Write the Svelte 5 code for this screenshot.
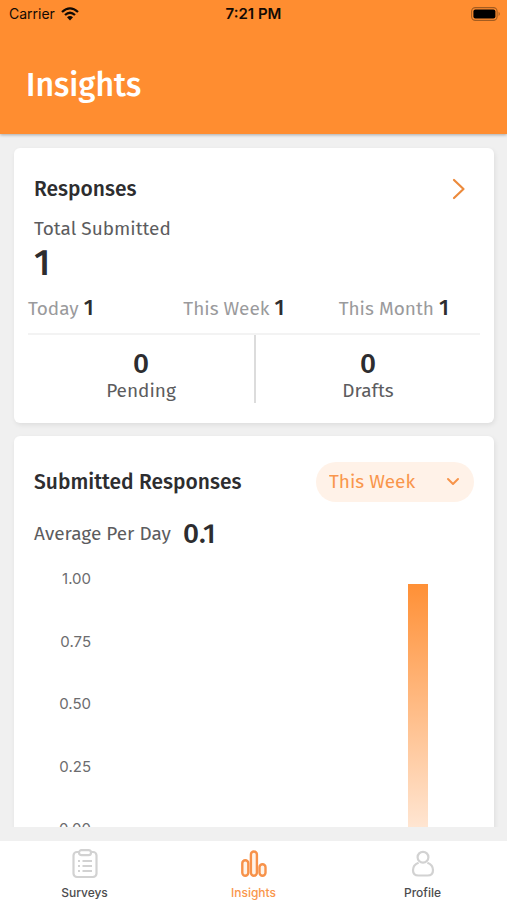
<script>
  const periods = [
    { label: 'Today', count: 1 },
    { label: 'This Week', count: 1 },
    { label: 'This Month', count: 1 }
  ];
  const queues = [
    { label: 'Pending', count: 0 },
    { label: 'Drafts', count: 0 }
  ];
  const ticks = ['1.00', '0.75', '0.50', '0.25', '0.00'];
  const days = [0, 0, 0, 0, 0, 0, 1];
  let range = $state('This Week');
</script>

<div class="app">
  <header>
    <div class="status">
      <div class="carrier">
        <span>Carrier</span>
        <svg width="20" height="14" viewBox="0 0 18 14" aria-hidden="true">
          <g fill="none" stroke="#120a04" stroke-width="2.3">
            <path d="M1 5 Q9 -2.2 17 5" />
            <path d="M4 8 Q9 3.4 14 8" />
          </g>
          <path d="M6 10.2 Q9 7.8 12 10.2 L9 13.4 Z" fill="#120a04" />
        </svg>
      </div>
      <time>7:21 PM</time>
      <div class="battery">
        <svg width="30" height="14" viewBox="0 0 30 14" aria-hidden="true">
          <rect x=".6" y=".6" width="25.5" height="12.8" rx="3.8" fill="none" stroke="#a35c20" stroke-width="1.1" />
          <rect x="2.4" y="2.4" width="22" height="9.2" rx="2" fill="#000" />
          <path d="M27.6 4.8 Q30 7 27.6 9.2Z" fill="#a35c20" />
        </svg>
      </div>
    </div>
    <h1>Insights</h1>
  </header>

  <main>
    <section class="card">
      <div class="card-head">
        <h2>Responses</h2>
        <button class="more" aria-label="View responses">
          <svg width="14" height="22" viewBox="0 0 14 22" aria-hidden="true">
            <path d="M2 2 L11.5 11 L2 20" fill="none" stroke="#ec8a3c" stroke-width="2.2" stroke-linecap="round" stroke-linejoin="round" />
          </svg>
        </button>
      </div>
      <div class="total">
        <p>Total Submitted</p>
        <strong>1</strong>
      </div>
      <div class="periods">
        {#each periods as p}
          <div>{p.label} <b>{p.count}</b></div>
        {/each}
      </div>
      <div class="queues">
        {#each queues as q}
          <div class="queue"><strong>{q.count}</strong><span>{q.label}</span></div>
        {/each}
      </div>
    </section>

    <section class="card">
      <div class="card-head">
        <h2>Submitted Responses</h2>
        <div class="picker">
          <select bind:value={range} aria-label="Period">
            <option>This Week</option>
            <option>This Month</option>
          </select>
          <svg width="14" height="10" viewBox="0 0 14 10" aria-hidden="true">
            <path d="M2 2 L7 7 L12 2" fill="none" stroke="#f7944a" stroke-width="2" stroke-linecap="round" stroke-linejoin="round" />
          </svg>
        </div>
      </div>
      <div class="average"><span>Average Per Day</span><strong>0.1</strong></div>
      <div class="chart">
        <div class="axis">
          {#each ticks as t}<span>{t}</span>{/each}
        </div>
        <div class="plot">
          {#each days as d}
            <div class="day"><div class="bar" style="height: {d * 100}%"></div></div>
          {/each}
        </div>
      </div>
    </section>
  </main>

  <nav>
    <a href="#surveys">
      <svg width="28" height="32" viewBox="0 0 28 32" aria-hidden="true">
        <g fill="none" stroke="#d2d2d2" stroke-width="2.2" stroke-linejoin="round">
          <rect x="2.5" y="4" width="23" height="25" rx="3.5" />
          <rect x="8" y="2.2" width="12" height="5" rx="2.5" fill="#fff" />
          <path stroke-width="1.8" d="M11.5 13 H21 M11.5 18 H21 M11.5 23 H21 M7 13 H9 M7 18 H9 M7 23 H9" />
        </g>
      </svg>
      <span>Surveys</span>
    </a>
    <a href="#insights" class="active" aria-current="page">
      <svg width="28" height="32" viewBox="0 0 28 32" aria-hidden="true">
        <g fill="#fff3e8" stroke="#f7924a" stroke-width="2.4">
          <rect x="2.3" y="12.3" width="6" height="15.4" rx="3" />
          <rect x="10.9" y="3.5" width="6" height="24.2" rx="3" />
          <rect x="19.5" y="16.3" width="6" height="11.4" rx="3" />
        </g>
      </svg>
      <span>Insights</span>
    </a>
    <a href="#profile">
      <svg width="28" height="32" viewBox="0 0 28 32" aria-hidden="true">
        <g fill="none" stroke="#d2d2d2" stroke-width="2.2">
          <circle cx="14" cy="9.2" r="5.4" />
          <path d="M9.6 14.8 Q4 17 4 22.2 Q4 27.5 9.5 27.5 H18.5 Q24 27.5 24 22.2 Q24 17 18.4 14.8" />
        </g>
      </svg>
      <span>Profile</span>
    </a>
  </nav>
</div>

<style>
  :global(body) { margin: 0; }
  .app {
    height: 100vh;
    display: flex;
    flex-direction: column;
    background: #f0f0f0;
    color: #2d2d2f;
    font-family: "Fira Sans", "Noto Sans", sans-serif;
  }
  h1, h2, p { margin: 0; }
  svg { display: block; }
  header {
    position: relative;
    background: #ff8d30;
    box-shadow: 0 1px 3px rgba(0, 0, 0, 0.3);
  }
  .status {
    display: grid;
    grid-template-columns: 1fr auto 1fr;
    align-items: center;
    height: 28px;
    padding: 0 6px;
    color: #120a04;
    font: 14px/20px Inter, sans-serif;
  }
  .carrier { display: flex; align-items: center; gap: 5px; padding-left: 3px; }
  time { font-size: 15px; font-weight: 600; }
  .battery { justify-self: end; }
  h1 {
    padding: 36px 26px 28px;
    color: #fff;
    font-size: 32px;
    line-height: 42px;
    font-weight: 500;
  }
  main {
    flex: 1;
    min-height: 0;
    margin-bottom: 14px;
    padding: 14px 13px 0 14px;
    overflow-y: auto;
    scrollbar-width: none;
    display: flex;
    flex-direction: column;
    gap: 13px;
  }
  .card {
    flex: none;
    padding-bottom: 20px;
    background: #fff;
    border-radius: 6px;
    box-shadow: 1px 2px 5px rgba(0, 0, 0, 0.08);
  }
  .card-head {
    display: flex;
    align-items: center;
    justify-content: space-between;
    height: 40px;
    padding: 21px 20px 0;
  }
  .card + .card .card-head { padding-top: 26px; }
  h2 { font-size: 21px; line-height: 28px; font-weight: 500; }
  .more {
    padding: 0 8px;
    border: 0;
    background: none;
  }
  .total { padding: 8px 20px 0; }
  .total p, .average span { color: #5c5c5e; font-size: 19px; line-height: 24px; }
  .total strong { display: block; font-size: 36px; line-height: 44px; font-weight: 500; }
  .periods {
    display: grid;
    grid-template-columns: repeat(3, 1fr);
    padding: 8px 0 9px 14px;
    color: #9a9a9c;
    font-size: 19px;
    line-height: 30px;
    white-space: nowrap;
  }
  .periods b { color: #2d2d2f; font-size: 22px; font-weight: 500; }
  .queues {
    display: grid;
    grid-template-columns: 1fr 1fr;
    margin: 0 14px;
    border-top: 2px solid #f3f3f3;
  }
  .queue {
    display: flex;
    flex-direction: column;
    align-items: center;
    padding-top: 14px;
  }
  .queue + .queue { border-left: 2px solid #dcdcdc; }
  .queue strong { font-size: 28px; line-height: 30px; font-weight: 500; }
  .queue span { color: #5c5c5e; font-size: 19px; line-height: 24px; }
  .picker { position: relative; }
  select {
    appearance: none;
    display: block;
    width: 158px;
    height: 40px;
    padding: 0 40px 0 13px;
    border: 0;
    border-radius: 20px;
    background: #fff2e8;
    color: #f9964c;
    font: 19px/24px "Fira Sans", "Noto Sans", sans-serif;
  }
  .picker svg { position: absolute; right: 14px; top: 15px; pointer-events: none; }
  .average {
    display: flex;
    align-items: center;
    gap: 12px;
    padding: 12px 20px 0;
  }
  .average strong { font-size: 28px; line-height: 40px; font-weight: 500; }
  .chart { display: flex; gap: 15px; padding: 15px 52px 0 20px; }
  .axis {
    display: flex;
    flex-direction: column;
    justify-content: space-between;
    width: 57px;
    height: 270px;
    color: #6c6c6e;
    font: 15px/20px Inter, sans-serif;
    text-align: right;
  }
  .plot {
    flex: 1;
    display: grid;
    grid-template-columns: repeat(7, 1fr);
    height: 245px;
    margin-top: 15px;
  }
  .day { display: flex; align-items: end; justify-content: center; }
  .bar { width: 20px; background: linear-gradient(#ff9036, #ffe6d3); }
  nav {
    display: grid;
    grid-template-columns: repeat(3, 1fr);
    height: 59px;
    background: #fff;
  }
  nav a {
    display: flex;
    flex-direction: column;
    align-items: center;
    gap: 4px;
    padding-top: 7px;
    color: #4c4c4e;
    font: 500 12px/18px Inter, sans-serif;
    text-decoration: none;
  }
  nav .active { color: #f9964c; }
</style>
